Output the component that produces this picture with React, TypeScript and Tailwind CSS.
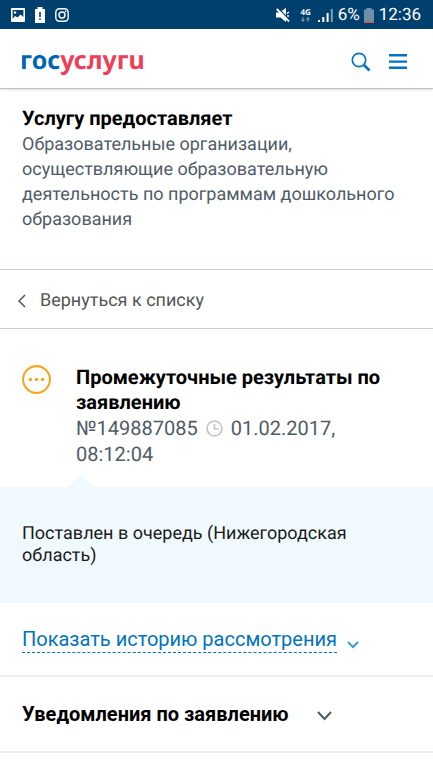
const StatusBar = () => {
  return (
    <div className="flex h-[29px] items-center justify-between bg-[#00406f] pt-px pl-[11px] pr-3 text-white">
      {/* Notifications */}
      <div className="flex items-center gap-[9px]">
        <svg width="14" height="14" viewBox="0 0 14 14" aria-hidden="true">
          <rect width="14" height="14" rx="1" fill="currentColor" />
          <path d="M1.6 11V2h10.8v7L9.5 6.5l-3 3L4 8z" fill="#00406f" />
          <circle cx="4" cy="4.5" r="1.2" fill="currentColor" />
        </svg>
        <svg className="-mx-1" width="20" height="16" viewBox="0 0 20 16" aria-hidden="true">
          <path d="M5 2h2.5V0h5v2H15v14H5z" fill="currentColor" />
          <path d="M9.2 5h1.6v5H9.2zM9.2 11.4h1.6V13H9.2z" fill="#00406f" />
        </svg>
        <svg width="14" height="14" viewBox="0 0 14 14" fill="none" stroke="currentColor" aria-hidden="true">
          <rect x="0.8" y="0.8" width="12.4" height="12.4" rx="3.6" strokeWidth="1.4" />
          <circle cx="7" cy="7" r="3" strokeWidth="1.4" />
          <circle cx="10.7" cy="3.3" r="0.9" fill="currentColor" stroke="none" />
        </svg>
      </div>

      {/* Sound, network, battery, time */}
      <div className="flex items-center">
        <svg className="mr-[10px]" width="14" height="14" viewBox="0 0 14 14" aria-hidden="true">
          <path d="M0 4.5h3L10 0v14L4.5 9.5H0z" fill="currentColor" />
          <path d="M11 5.5 13 4M11 8h2" stroke="currentColor" strokeWidth="1.3" />
          <path d="M2 0 14 12.5" stroke="#00406f" strokeWidth="1.4" />
          <path d="M.8 1 13 13.5" stroke="currentColor" strokeWidth="1.8" />
        </svg>
        <div className="mr-[6px] flex w-3 flex-col items-center font-['Open_Sans',sans-serif] text-[8px] leading-[8px] font-bold">
          <span>4G</span>
          <svg width="9" height="5" viewBox="0 0 9 5" fill="#7f9fb7" aria-hidden="true">
            <path d="M1.5 0h1v2.5H4L2 5 0 2.5h1.5zM6.5 5h1V2.5H9L7 0 5 2.5h1.5z" />
          </svg>
        </div>
        <svg className="mr-[5px]" width="15" height="14" viewBox="0 0 15 14" aria-hidden="true">
          <path d="M0 12h2v2H0zM4.3 9h2v5h-2zM8.6 5h2v9h-2z" fill="currentColor" />
          <path d="M12.8 1h2v13h-2z" fill="#7f9fb7" />
        </svg>
        <span className="mr-1 pt-[2px] text-[17px]">6%</span>
        <svg className="mr-[5px]" width="10" height="15" viewBox="0 0 10 15" aria-hidden="true">
          <path d="M0 1.5h2.5V0h5v1.5H10V15H0z" fill="#6f8ea8" />
          <path d="M0 13.5h10V15H0z" fill="#c95f4c" />
        </svg>
        <span className="pt-[2px] text-[17px]">12:36</span>
      </div>
    </div>
  );
};

const Header = () => {
  return (
    <header className="flex h-[60px] items-center justify-between border-b border-[#c4c4c4] bg-white px-5 shadow-sm">
      <a
        href="#"
        aria-label="госуслуги"
        className="pt-[2px] font-['Noto_Sans',sans-serif] text-[25px] leading-8 font-bold text-[#ee3f58]"
      >
        <span className="text-[#0065b1]">гос</span>услугu
      </a>
      <div className="flex items-center gap-[18px] pr-[6px] pt-[6px] text-[#0173c1]">
        <button type="button" aria-label="Поиск">
          <svg width="20" height="20" viewBox="0 0 20 20" fill="none" stroke="currentColor" aria-hidden="true">
            <circle cx="8" cy="8" r="6.7" strokeWidth="1.7" />
            <path d="m12.5 12.5 6 6" strokeWidth="2.6" />
          </svg>
        </button>
        <button type="button" aria-label="Меню">
          <svg width="18" height="16" viewBox="0 0 18 16" fill="currentColor" aria-hidden="true">
            <path d="M0 0h18v2.4H0zM0 6.4h18v2.4H0zM0 12.6h18V15H0z" />
          </svg>
        </button>
      </div>
    </header>
  );
};

const Provider = () => {
  return (
    <section className="px-[22px] pt-4 pb-[37px]">
      <h2 className="mb-px text-xl leading-[26px] font-bold">Услугу предоставляет</h2>
      <p className="text-lg leading-[25px] text-[#505b67]">
        Образовательные организации, осуществляющие образовательную деятельность по программам дошкольного
        образования
      </p>
    </section>
  );
};

const Application = () => {
  return (
    <section>
      <div className="flex items-start gap-[25px] px-[22px] pt-9">
        <svg className="shrink-0" width="29" height="29" viewBox="0 0 29 29" aria-hidden="true">
          <circle cx="14.5" cy="14.5" r="13.4" fill="none" stroke="#f5a81c" strokeWidth="2.1" />
          <g fill="#f5a81c">
            <circle cx="8.4" cy="14.5" r="1.8" />
            <circle cx="14.5" cy="14.5" r="1.8" />
            <circle cx="20.6" cy="14.5" r="1.8" />
          </g>
        </svg>
        <div className="min-w-0 flex-1">
          <h3 className="text-xl leading-[25px] font-bold">Промежуточные результаты по заявлению</h3>
          <div className="flex flex-wrap items-center gap-x-2 text-xl leading-[26px] text-[#505b67]">
            <span>№149887085</span>
            <svg width="17" height="17" viewBox="0 0 17 17" fill="none" aria-hidden="true">
              <circle cx="8.5" cy="8.5" r="7.4" stroke="#c3c5c5" strokeWidth="1.7" />
              <path d="M8.5 4v5H13" stroke="#c3c5c5" strokeWidth="1.7" />
            </svg>
            <span>01.02.2017,</span>
            <span>08:12:04</span>
          </div>
        </div>
      </div>

      {/* Current state with the pointer above it */}
      <svg className="mt-[7px] ml-[68px] block" width="26" height="13" viewBox="0 0 26 13" fill="#f0f9fd" aria-hidden="true">
        <path d="M0 13 13 0l13 13z" />
      </svg>
      <div className="bg-[#f0f9fd] px-[22px] py-9">
        <p className="text-lg leading-[22px] text-[#1a1a1a]">Поставлен в очередь (Нижегородская область)</p>
      </div>
    </section>
  );
};

const App = () => {
  return (
    <div className="min-h-screen bg-white font-[Roboto,sans-serif] text-black [text-rendering:geometricPrecision]">
      <StatusBar />
      <Header />
      <main>
        <Provider />
        <a
          href="#"
          className="flex h-[60px] items-center gap-[14px] border-y border-[#c5cfd3] px-[18px] pt-1 text-lg text-[#555555]"
        >
          <svg width="8" height="14" viewBox="0 0 8 14" fill="none" stroke="currentColor" strokeWidth="1.5" aria-hidden="true">
            <path d="M7 1 1 7l6 6" />
          </svg>
          Вернуться к списку
        </a>
        <Application />
        <div className="border-b-2 border-[#eeeeee] px-[22px] pt-6 pb-[22px]">
          <button type="button" className="flex items-end gap-[10px] text-xl leading-[25px] text-[#0173c1]">
            <span className="border-b border-dashed border-[#0173c1]">Показать историю рассмотрения</span>
            <svg className="mb-1" width="12" height="8" viewBox="0 0 12 8" fill="none" stroke="#3e9bd6" strokeWidth="2" aria-hidden="true">
              <path d="m1 1 5 5 5-5" />
            </svg>
          </button>
        </div>
        <div className="border-b-2 border-[#eeeeee] px-[22px] py-6">
          <button type="button" className="flex items-center gap-7 text-xl leading-[26px] font-bold">
            Уведомления по заявлению
            <svg className="mt-1" width="15" height="10" viewBox="0 0 15 10" fill="none" stroke="#505b67" strokeWidth="2" aria-hidden="true">
              <path d="m1 1 6.5 7L14 1" />
            </svg>
          </button>
        </div>
      </main>
    </div>
  );
};

export default App;
